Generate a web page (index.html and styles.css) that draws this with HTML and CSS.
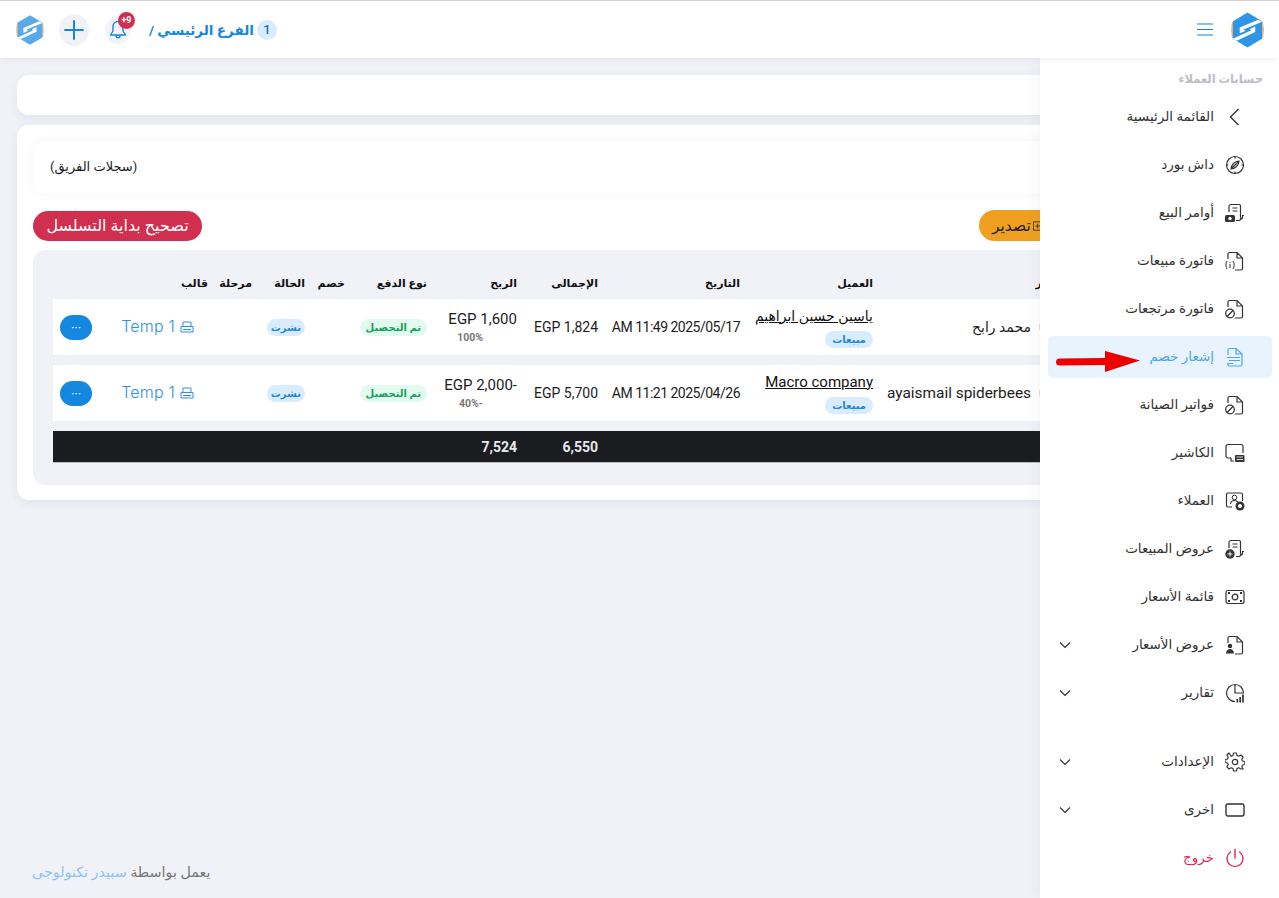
FILE: index.html
```
<!DOCTYPE html>
<html lang="ar" dir="rtl">
<head>
<meta charset="utf-8">
<title>إشعار خصم</title>
<link rel="stylesheet" href="styles.css">
</head>
<body>
<svg class="defs" width="0" height="0" aria-hidden="true">
  <symbol id="logo" viewBox="0 0 34 36">
    <path fill="#f2b27a" d="M1 9.500 0 18l1 8.500 2-1V10.500zM33 9.500 34 18l-1 8.500-2-1V10.500z"/>
    <path fill="#2f96e6" d="M17 0 32 9v18l-15 9-15-9V9z"/>
    <path fill="#fff" d="M9 15.500 28 7.500 32 9.500 13 17.500 14.500 19 9 21.500zM2 27 20.500 18.500 19.500 17 25 14.500v5.500L6 29z"/>
  </symbol>
  <symbol id="doc" viewBox="0 0 20 20">
    <path fill="none" stroke="currentColor" stroke-width="1.200" d="M3 8V3a1.500 1.500 0 0 1 1.500-1.500H12L17.500 7v10.500A1.500 1.500 0 0 1 16 19h-6M12 1.500V7h5.500"/>
  </symbol>
  <symbol id="scroll" viewBox="0 0 20 20">
    <path fill="none" stroke="currentColor" stroke-width="1.200" d="M4 9V3.500A2 2 0 0 1 6 1.500h8a1.500 1.500 0 0 1 1.500 1.500v13a2 2 0 0 0 2-2v-1.500h1.500M15.500 16A1.500 1.500 0 0 1 14 17.500h-3M7.500 5h5M7.500 8h5"/>
  </symbol>
  <symbol id="chev" viewBox="0 0 12 8">
    <path fill="none" stroke="currentColor" stroke-width="1.200" d="M1 1.500 6 6.500l5-5"/>
  </symbol>
</svg>

<header class="topbar">
  <div class="top-left">
    <svg class="avatar-logo"><use href="#logo"/></svg>
    <button class="round-btn"><svg width="20" height="20" viewBox="0 0 20 20"><path stroke="#1488e0" stroke-width="2" stroke-linecap="round" d="M10 1v18M1 10h18"/></svg></button>
    <div class="bell">
      <svg width="18" height="20" viewBox="0 0 18 20"><path fill="none" stroke="#1488e0" stroke-width="1.400" stroke-linejoin="round" d="M9 1.500c-3 0-5 2.200-5 5v4.500L1.500 15h15L14 11V6.500c0-2.800-2-5-5-5zM7 15.500c0 3 4 3 4 0"/></svg>
      <span class="bell-badge">+9</span>
    </div>
    <div class="branch"><span class="branch-num">1</span><span>الفرع الرئيسي /</span></div>
  </div>
  <div class="top-right">
    <svg class="brand-logo"><use href="#logo"/></svg>
    <svg class="burger" width="16" height="13" viewBox="0 0 16 13"><path stroke="#1488e0" stroke-width="1.100" d="M0 1h16M0 6.500h16M0 12h16"/></svg>
  </div>
</header>

<main class="content">
  <div class="card card-empty"></div>
  <section class="card card-main">
    <div class="title-box"><span class="title-text">(سجلات الفريق)</span></div>
    <div class="toolbar">
      <div class="tool-group">
        <button class="btn btn-orange"><svg width="12" height="12" viewBox="0 0 12 12"><path fill="none" stroke="#222" d="M.5.500h11v11H.5zM3 6h6M6 3v6"/></svg>تصدير</button>
      </div>
      <button class="btn btn-red">تصحيح بداية التسلسل</button>
    </div>
    <div class="table-box">
      <div class="grid-row head-row">
        <span></span><span>المحرر</span><span>العميل</span><span>التاريخ</span><span>الإجمالى</span><span>الربح</span><span>نوع الدفع</span><span>خصم</span><span>الحالة</span><span>مرحلة</span><span>قالب</span><span></span>
      </div>
      <div class="grid-row data-row">
        <span></span>
        <span class="who who-ar"><i class="mini-avatar"></i>محمد رابح</span>
        <span class="stack"><a class="link link-ar">ياسين حسين ابراهيم</a><b class="chip chip-blue">مبيعات</b></span>
        <span class="date">2025/05/17 11:49 AM</span>
        <span>1,824 EGP</span>
        <span class="stack tight"><span>1,600 EGP</span><small class="pct">100%</small></span>
        <span><b class="chip chip-green">تم التحصيل</b></span>
        <span></span>
        <span><b class="chip chip-blue chip-status">نشرت</b></span>
        <span></span>
        <span class="temp"><svg width="14" height="12" viewBox="0 0 14 12"><path fill="none" stroke="#2e90e8" d="M3 5V1h8v4M1 5.500h12V11H1zM3 8.500h8"/></svg><span class="temp-name">Temp 1</span></span>
        <span class="act"><button class="more">···</button></span>
      </div>
      <div class="grid-row data-row">
        <span></span>
        <span class="who"><i class="mini-avatar"></i>ayaismail spiderbees</span>
        <span class="stack"><a class="link">Macro company</a><b class="chip chip-blue">مبيعات</b></span>
        <span class="date">2025/04/26 11:21 AM</span>
        <span>5,700 EGP</span>
        <span class="stack tight"><span>-2,000 EGP</span><small class="pct">-40%</small></span>
        <span><b class="chip chip-green">تم التحصيل</b></span>
        <span></span>
        <span><b class="chip chip-blue chip-status">نشرت</b></span>
        <span></span>
        <span class="temp"><svg width="14" height="12" viewBox="0 0 14 12"><path fill="none" stroke="#2e90e8" d="M3 5V1h8v4M1 5.500h12V11H1zM3 8.500h8"/></svg><span class="temp-name">Temp 1</span></span>
        <span class="act"><button class="more">···</button></span>
      </div>
      <div class="grid-row total-row">
        <span></span><span></span><span></span><span></span><span>6,550</span><span>7,524</span>
      </div>
    </div>
  </section>
  <footer class="foot">يعمل بواسطة <a class="foot-link">سبيدر تكنولوجى</a></footer>
</main>

<aside class="sidebar">
  <div class="side-label">حسابات العملاء</div>
  <nav class="side-nav">
    <a class="item"><svg class="ico" viewBox="0 0 20 20"><path fill="none" stroke="currentColor" stroke-width="1.400" d="M13.500 2 5.500 10l8 8"/></svg><span>القائمة الرئيسية</span></a>
    <a class="item"><svg class="ico" viewBox="0 0 20 20"><g fill="none" stroke="currentColor" stroke-width="1.200"><circle cx="10" cy="10" r="8.500"/><path d="M6 14c0-4 4-8 8-8 0 4-4 8-8 8zM6 14l8-8M10 1.500V3.500M10 16.500v2M1.500 10h2M16.500 10h2"/></g></svg><span>داش بورد</span></a>
    <a class="item"><svg class="ico"><use href="#scroll"/></svg><svg class="ico-over" viewBox="0 0 20 20"><rect x="0" y="12" width="10" height="7" rx="1.500" fill="#333"/><circle cx="5" cy="15.500" r="1.700" fill="#fff"/></svg><span>أوامر البيع</span></a>
    <a class="item"><svg class="ico"><use href="#doc"/></svg><svg class="ico-over" viewBox="0 0 20 20"><path fill="none" stroke="#333" d="M2 10c-1.500 2-1.500 6 0 8M8 10c1.500 2 1.500 6 0 8M5 11v.800M5 13v4"/></svg><span>فاتورة مبيعات</span></a>
    <a class="item"><svg class="ico"><use href="#doc"/></svg><svg class="ico-over" viewBox="0 0 20 20"><g fill="#fff" stroke="#333" stroke-width="1.200"><circle cx="5" cy="14.500" r="4.300"/><path d="M2 17.500 8 11.500"/></g></svg><span>فاتورة مرتجعات</span></a>
    <a class="item item-active"><svg class="ico" viewBox="0 0 20 20"><g fill="none" stroke="currentColor" stroke-width="1.200"><path d="M3 8V3a1.500 1.500 0 0 1 1.500-1.500H11L17 7v10.500a1.500 1.500 0 0 1-1.500 1.500h-11A1.500 1.500 0 0 1 3 17.500v-1M11 1.500V7h6M2 10.500h13M4 13.500h11M2 16.500h6"/></g></svg><span>إشعار خصم</span></a>
    <a class="item"><svg class="ico"><use href="#doc"/></svg><svg class="ico-over" viewBox="0 0 20 20"><g fill="#fff" stroke="#333" stroke-width="1.200"><circle cx="5" cy="14.500" r="4.300"/><path d="M2 17.500 8 11.500"/></g></svg><span>فواتير الصيانة</span></a>
    <a class="item"><svg class="ico" viewBox="0 0 20 20"><path fill="none" stroke="currentColor" stroke-width="1.200" d="M6 15H3a2 2 0 0 1-2-2V3.500a2 2 0 0 1 2-2h13a2 2 0 0 1 2 2V10M6 15v3h3"/><rect x="10" y="12" width="9.500" height="7" rx="1" fill="#333"/><path stroke="#fff" stroke-width=".8" d="M11.500 14h6.500M11.500 16.500h6.500"/></svg><span>الكاشير</span></a>
    <a class="item"><svg class="ico" viewBox="0 0 20 20"><path fill="none" stroke="currentColor" stroke-width="1.200" d="M7 16H3a1.500 1.500 0 0 1-1.500-1.500v-11A1.500 1.500 0 0 1 3 2h13a1.500 1.500 0 0 1 1.500 1.500V10M5.500 13c0-2 2-3.500 4-3.500s3 1 3.500 2"/><circle cx="9.500" cy="6.500" r="2.300" fill="none" stroke="currentColor"/><circle cx="15" cy="15" r="4.500" fill="#333"/><circle cx="15" cy="15" r="2" fill="#fff"/></svg><span>العملاء</span></a>
    <a class="item"><svg class="ico"><use href="#scroll"/></svg><svg class="ico-over" viewBox="0 0 20 20"><circle cx="5" cy="15" r="4.700" fill="#333"/><path stroke="#fff" d="M2.500 15h5M5 12.500v5"/></svg><span>عروض المبيعات</span></a>
    <a class="item"><svg class="ico" viewBox="0 0 20 20"><g fill="none" stroke="currentColor" stroke-width="1.200"><rect x="1" y="3.500" width="18" height="13" rx="2"/><circle cx="10" cy="10" r="2.800"/><path stroke-width="2" d="M3 6h2M15 6h2M3 14h2M15 14h2"/></g></svg><span>قائمة الأسعار</span></a>
    <a class="item"><svg class="ico"><use href="#doc"/></svg><svg class="ico-over" viewBox="0 0 20 20"><circle cx="5" cy="11" r="2.200" fill="#333"/><path fill="#333" d="M1 18.500c0-3 2-4.500 4-4.500s4 1.500 4 4.500z"/></svg><span>عروض الأسعار</span><svg class="chev"><use href="#chev"/></svg></a>
    <a class="item"><svg class="ico" viewBox="0 0 20 20"><g fill="none" stroke="currentColor" stroke-width="1.200"><path d="M10 1.500A8.500 8.500 0 0 0 10 18.500M10 1.500V10h8.500A8.500 8.500 0 0 0 10 1.500z"/></g><path fill="#333" d="M11.500 16h1.700v3.500h-1.700zM14.300 14h1.700v5.500h-1.700zM17.100 11.500h1.700v8h-1.700z"/></svg><span>تقارير</span><svg class="chev"><use href="#chev"/></svg></a>
    <a class="item item-gap"><svg class="ico" viewBox="0 0 20 20"><g fill="none" stroke="currentColor" stroke-width="1.200"><circle cx="10" cy="10" r="2.700"/><path stroke-linejoin="round" d="M8.500 1h3l.5 2.500 1.700.8L16 3l2.100 2.200-1.300 2.100.7 1.700 2.500.5v3l-2.500.5-.7 1.700 1.300 2.100L16 17l-2.300-1.300-1.700.8-.5 2.500h-3L8 16.500l-1.700-.8L4 17l-2.100-2.200 1.300-2.100-.7-1.700L0 10.500v-3l2.500-.5.700-1.700L1.900 3 4 1l2.300 3.300L8 3.500z"/></g></svg><span>الإعدادات</span><svg class="chev"><use href="#chev"/></svg></a>
    <a class="item"><svg class="ico" viewBox="0 0 20 20"><rect x="1" y="4" width="18" height="12" rx="2" fill="none" stroke="currentColor" stroke-width="1.400"/></svg><span>اخرى</span><svg class="chev"><use href="#chev"/></svg></a>
    <a class="item item-exit"><svg class="ico" viewBox="0 0 20 20"><path fill="none" stroke="currentColor" stroke-width="1.400" stroke-linecap="round" d="M10 1.500V10M5.500 4a8 8 0 1 0 9 0"/></svg><span>خروج</span></a>
  </nav>
  <svg class="arrow" width="86" height="26" viewBox="0 0 86 26"><path fill="#ee0000" d="M3.500 9.500 49 9V2l35 9.500L49 23v-7l-45.500.5a3.500 3.500 0 0 1 0-7z"/></svg>
</aside>
</body>
</html>
```
FILE: styles.css
```
* { box-sizing: border-box; }
html, body { margin: 0; height: 100%; }
body {
  position: relative;
  display: flex;
  flex-direction: column;
  height: 898px;
  overflow: hidden;
  background: #f1f2f8;
  color: #1c1c1c;
  font-family: Roboto, "Noto Sans", "DejaVu Sans", sans-serif;
  font-size: 14px;
}
.defs { position: absolute; }
button { font-family: inherit; border: 0; cursor: pointer; }

.topbar {
  flex: 0 0 58px;
  display: flex;
  direction: ltr;
  align-items: center;
  justify-content: space-between;
  padding: 0 15px 0 16px;
  background: #fff;
  border-top: 1px solid #cfcfcf;
  box-shadow: 0 2px 6px rgba(60, 60, 90, .06);
  position: relative;
  z-index: 2;
}
.top-left { display: flex; align-items: center; }
.avatar-logo { width: 28px; height: 30px; opacity: .8; }
.round-btn {
  width: 30px; height: 32px; margin-left: 15px; padding: 0;
  display: flex; align-items: center; justify-content: center;
  border-radius: 50%; background: #f0f2f8;
}
.bell {
  position: relative; width: 26px; height: 28px; margin-left: 16px;
  display: flex; align-items: center; justify-content: center;
  border-radius: 50%; background: #f3f4f9;
}
.bell-badge {
  position: absolute; top: -4px; right: -4px; width: 17px; height: 17px;
  border-radius: 50%; background: #d02f50; color: #fff;
  font-size: 9px; font-weight: 700; line-height: 17px; text-align: center;
}
.branch {
  direction: rtl; display: flex; align-items: center; gap: 3px;
  margin-left: 18px; color: #1488e0; font-size: 13.500px; font-weight: 700;
}
.branch-num {
  width: 20px; height: 20px; border-radius: 50%; background: #d8ecfd;
  font-size: 13px; font-weight: 500; text-align: center; line-height: 20px; color: #1b6fb5;
}
.top-right { display: flex; flex-direction: row-reverse; align-items: center; gap: 18px; }
.brand-logo { width: 33px; height: 36px; }

.content {
  flex: 1; min-height: 0;
  display: flex; flex-direction: column;
  padding: 17px 17px 18px;
}
.card {
  background: #fff; border-radius: 12px;
  box-shadow: 0 3px 10px rgba(60, 60, 100, .08);
}
.card-empty { height: 40px; margin-bottom: 10px; }
.card-main { padding: 16px 16px 15px; }
.title-box {
  height: 53px; padding: 0 17px; display: flex; align-items: center;
  justify-content: flex-end; border-radius: 12px; background: #fff;
  box-shadow: 0 0 10px rgba(60, 60, 100, .06);
}
.title-text { font-size: 13px; margin-bottom: 2px; }
.toolbar {
  display: flex; justify-content: space-between; align-items: center;
  height: 31px; margin: 16px 0 9px;
}
.tool-group { display: flex; align-items: center; padding-right: 191px; }
.btn {
  height: 31px; padding: 0 13px; border-radius: 16px; font-size: 15.500px;
  display: inline-flex; align-items: center; gap: 2px; white-space: nowrap;
}
.btn-orange { background: #f0a020; color: #222; width: 76px; }
.btn-red { background: #d02f50; color: #fff; height: 30px; width: 169px; padding: 0; justify-content: center; font-size: 16px; }

.table-box {
  padding: 20px 20px 22px; border-radius: 12px; background: #f1f2f8;
}
.grid-row {
  display: grid;
  grid-template-columns: 1fr 199px 133px 142px 81px 90px 82px 40px 53px 44px 97px 58px;
}
.grid-row > span { display: flex; align-items: center; min-width: 0; white-space: nowrap; }
.head-row { height: 29px; font-size: 11px; font-weight: 700; color: #111; padding-bottom: 3px; }
.data-row {
  height: 56px; margin-bottom: 10px; background: #fff; font-size: 14px;
}
.total-row {
  height: 32px; background: #1b1c1f; color: #e8e8ee; font-weight: 700; font-size: 14px;
  border-bottom: 1px solid #bbb;
}
.grid-row > .date { letter-spacing: -.5px; }
.who { padding-right: 15px; font-size: 15.400px; }
.grid-row > .who-ar { font-size: 14px; }
.mini-avatar {
  width: 18px; height: 18px; margin-left: 8px; border-radius: 50%; background: #e8dcc8; flex: none;
}
.grid-row > .stack {
  flex-direction: column; align-items: flex-start; justify-content: center; gap: 6px; padding-top: 1px;
}
.grid-row > .stack.tight { gap: 3px; padding-top: 0; font-size: 15px; }
.link { color: #111; text-decoration: underline; white-space: nowrap; line-height: 17px; font-size: 15px; }
.link-ar { font-size: 14px; }
.pct { color: #777; font-size: 10.500px; font-weight: 700; margin-right: 34px; }
.chip {
  display: inline-block; padding: 0 7px; height: 17px; line-height: 17px;
  border-radius: 9px; font-size: 10px; font-weight: 700; white-space: nowrap;
}
.chip-blue { background: #d8ecfd; color: #1f86d8; }
.chip-green { background: #e3fbee; color: #1a9f62; padding: 0 6px; }
.chip-status { padding: 0 4px; }
.temp { padding-right: 14px; gap: 5px; color: #2e90e8; font-family: Inter, sans-serif; font-size: 16px; font-weight: 300; letter-spacing: .2px; }
.temp-name { margin-bottom: 3px; }
.act { justify-content: flex-end; padding-left: 7px; }
.more {
  width: 32px; height: 25px; padding: 0; border-radius: 12.500px; background: #1488e0;
  color: #fff; font-size: 13px; font-weight: 400; line-height: 25px;
}

.foot { margin-top: auto; margin-left: 15px; align-self: flex-end; font-size: 14.300px; color: #777; }
.foot-link { color: #8ec5f0; }

.sidebar {
  position: absolute; top: 58px; right: 0; bottom: 0; width: 239px; z-index: 1;
  background: #fff; padding-top: 14px;
  box-shadow: 0 0 14px rgba(60, 60, 90, .07);
}
.side-label {
  height: 14px; padding-right: 16px; font-size: 11.500px; font-weight: 700; color: #bdbdc4; line-height: 14px;
}
.side-nav { display: flex; flex-direction: column; gap: 6px; padding: 9px 7px 0 8px; margin-top: 1px; }
.item {
  position: relative; display: flex; align-items: center; height: 42px; padding-right: 27px;
  border-radius: 5px; color: #333; font-size: 13.500px;
}
.item > span { margin-bottom: 2px; }
.ico { width: 20px; height: 20px; flex: none; margin-left: 11px; }
.ico-over { position: absolute; right: 27px; top: 11px; width: 20px; height: 20px; }
.chev { position: absolute; left: 11px; top: 17px; width: 12px; height: 8px; color: #333; }
.item-active { background: #e8f3fd; color: #4aa8ee; }
.item-gap { margin-top: 21px; }
.item-exit { color: #e0284f; }
.arrow { position: absolute; left: 16px; top: 291px; }
```
